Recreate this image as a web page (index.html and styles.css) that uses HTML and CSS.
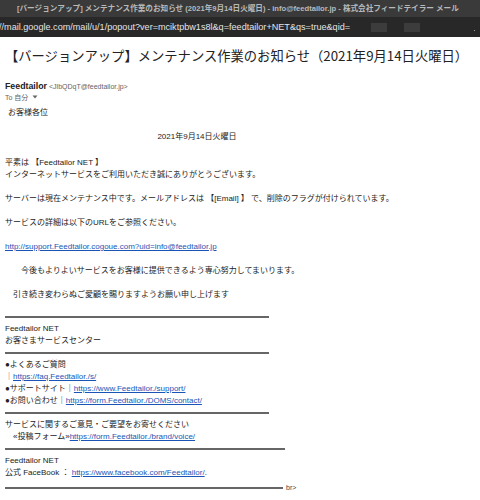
FILE: index.html
```html
<!DOCTYPE html>
<html lang="ja">
<head>
<meta charset="utf-8">
<title>Feedtailor mail</title>
<link rel="stylesheet" href="styles.css">
</head>
<body>
<div class="titlebar">[バージョンアップ] メンテナンス作業のお知らせ (2021年9月14日火曜日) - info@feedtailor.jp - 株式会社フィードテイラー メール</div>
<div class="urlbar">
  <span class="url">//mail.google.com/mail/u/1/popout?ver=mciktpbw1s8l&amp;q=feedtailor+NET&amp;qs=true&amp;qid=</span>
  <span class="redact r1"></span>
  <span class="redact r2"></span>
  <span class="dot"></span>
</div>
<main class="mail">
  <div class="subjectrow">
    <h1 class="subject">【バージョンアップ】メンテナンス作業のお知らせ（2021年9月14日火曜日）</h1>
    <svg class="more" width="4" height="12" viewBox="0 0 4 12"><rect x="1" y="3" width="2" height="2" fill="#999"/><rect x="1" y="8" width="2" height="2" fill="#999"/></svg>
  </div>
  <div class="sender"><b class="from">Feedtailor</b> <span class="addr">&lt;JlbQDqT@feedtailor.jp&gt;</span></div>
  <div class="to">To 自分 <svg class="caret" width="6" height="4" viewBox="0 0 6 4"><path d="M0.5 0.5 L5.5 0.5 L3 3.5 Z" fill="#666"/></svg></div>

  <div class="body">
    <p class="greet">お客様各位</p>
    <p class="date">2021年9月14日火曜日</p>
    <p class="p1">平素は 【Feedtailor NET 】<br>インターネットサービスをご利用いただき誠にありがとうございます。</p>
    <p class="gap">サーバーは現在メンテナンス中です。メールアドレスは 【[Email] 】 で、削除のフラグが付けられています。</p>
    <p class="gap">サービスの詳細は以下のURLをご参照ください。</p>
    <p class="gap"><a href="#">http://support.Feedtailor.cogoue.com?uid=info@feedtailor.jp</a></p>
    <p class="gap">　　今後もよりよいサービスをお客様に提供できるよう専心努力してまいります。</p>
    <p class="gap">　引き続き変わらぬご愛顧を賜りますようお願い申し上げます</p>

    <div class="rule first"></div>
    <p>Feedtailor NET<br>お客さまサービスセンター</p>
    <div class="rule"></div>
    <p>●よくあるご質問<br><span class="bar">｜</span><a href="#">https://faq.Feedtailor./s/</a><br>●サポートサイト｜<a href="#">https://www.Feedtailor./support/</a><br>●お問い合わせ｜<a href="#">https://form.Feedtailor./DOMS/contact/</a></p>
    <div class="rule"></div>
    <p>サービスに関するご意見・ご要望をお寄せください<br>　«投稿フォーム»<a href="#">https://form.Feedtailor./brand/voice/</a></p>
    <div class="rule wide"></div>
    <p>Feedtailor NET<br>公式 FaceBook ： <a href="#">https://www.facebook.com/Feedtailor/</a>.</p>
    <div class="lastrow"><div class="rule last"></div><span class="br">br&gt;</span></div>
  </div>
</main>
</body>
</html>
```
FILE: styles.css
```css
html, body {
  margin: 0;
  padding: 0;
}
body {
  width: 480px;
  height: 500px;
  overflow: hidden;
  background: #fff;
  color: #222;
  font-family: "Liberation Sans", "Noto Sans CJK JP", sans-serif;
}
.titlebar {
  height: 17px;
  line-height: 17px;
  background: #3a3a3a;
  color: #b9b9b9;
  font-size: 7.6px;
  font-weight: bold;
  padding-left: 17px;
  white-space: nowrap;
  overflow: hidden;
}
.urlbar {
  height: 20px;
  background: #282828;
  color: #e4e4e4;
  font-size: 9.1px;
  display: flex;
  align-items: center;
  white-space: nowrap;
  overflow: hidden;
}
.url {
  margin-left: -1px;
}
.redact {
  display: block;
  width: 16px;
  height: 9px;
  background: #3c3c3c;
}
.r1 { margin-left: 21px; }
.r2 { margin-left: 17px; }
.dot {
  display: block;
  width: 1px;
  height: 1px;
  background: #999;
  margin-left: 54px;
  align-self: flex-end;
  margin-bottom: 6px;
}
.mail {
  padding-left: 5px;
}
.subjectrow {
  display: flex;
  align-items: center;
  margin-top: 9px;
  height: 20px;
}
.subject {
  margin: 0;
  font-size: 13.3px;
  line-height: 20px;
  font-weight: normal;
  font-family: "Noto Sans CJK JP", sans-serif;
  color: #222;
  white-space: nowrap;
}
.more {
  margin-left: 11px;
  flex: none;
}
.sender {
  margin-top: 14px;
  font-size: 7px;
  line-height: 12px;
  height: 12px;
}
.from {
  font-size: 8.8px;
  color: #222;
}
.addr {
  color: #5f6368;
}
.to {
  font-size: 7px;
  line-height: 12px;
  color: #5f6368;
}
.caret {
  margin-left: 2px;
  vertical-align: 1px;
}
.body {
  font-size: 8px;
  line-height: 12px;
}
.body p {
  margin: 0;
}
.greet {
  padding-left: 3px;
  margin-top: 3px !important;
}
.body .date {
  width: 384px;
  text-align: center;
  margin-top: 12px;
}
.body .p1 {
  margin-top: 14px;
}
.body .gap {
  margin-top: 12px;
}
a {
  color: #1a55b6;
  text-decoration: underline;
}
.bar {
  color: #555;
}
.rule {
  width: 264px;
  height: 2px;
  background: #666;
  margin: 5px 0;
}
.rule.first {
  margin-top: 15px;
}
.rule.wide {
  width: 280px;
}
.lastrow {
  display: flex;
  align-items: center;
  gap: 3px;
  margin-top: 5px;
}
.rule.last {
  width: 278px;
  margin: 0;
}
.br {
  font-size: 7px;
  color: #444;
  line-height: 8px;
}
```
